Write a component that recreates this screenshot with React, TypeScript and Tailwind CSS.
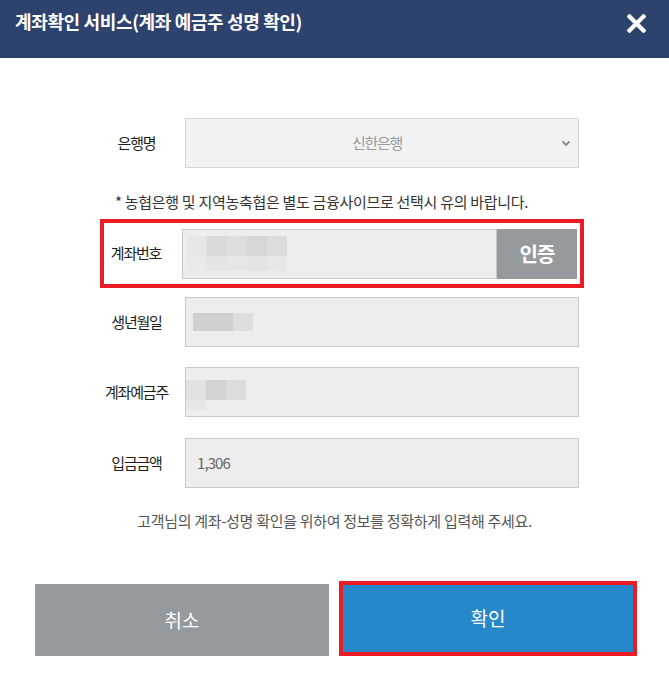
import React from 'react';

const font = { fontFamily: '"Noto Sans CJK KR", "Noto Sans", sans-serif' };

type Cell = { w: number; h: number; c: string };

// pixelated (blurred) placeholder for hidden personal data
const Mosaic: React.FC<{ rows: Cell[][] }> = ({ rows }) => (
  <div className="flex flex-col">
    {rows.map((row, i) => (
      <div key={i} className="flex">
        {row.map((cell, j) => (
          <div key={j} style={{ width: cell.w, height: cell.h, background: cell.c }} />
        ))}
      </div>
    ))}
  </div>
);

const Label: React.FC<{ children: React.ReactNode }> = ({ children }) => (
  <div className="w-[97px] shrink-0 text-center text-[15px] tracking-[-0.08em] text-[#1e1e1e]">{children}</div>
);

const Field: React.FC<{ children?: React.ReactNode; className?: string }> = ({ children, className = '' }) => (
  <div className={`flex h-[50px] w-[394px] items-center border border-[#c9c9c9] bg-[#ededed] ${className}`}>
    {children}
  </div>
);

const App: React.FC = () => {
  return (
    <div className="h-[688px] w-[669px] bg-white" style={font}>
      <header className="flex h-[58px] items-start justify-between bg-[#2e426e] px-[15px] pt-[8px]">
        <h1 className="text-[18px] font-bold tracking-[-0.02em] text-white">계좌확인 서비스(계좌 예금주 성명 확인)</h1>
        <button className="mr-[8px] mt-[6px]" aria-label="닫기">
          <svg width="19" height="19" viewBox="0 0 19 19">
            <path d="M2.5 2.5 L16.5 16.5 M16.5 2.5 L2.5 16.5" stroke="white" strokeWidth="4.2" strokeLinecap="square" />
          </svg>
        </button>
      </header>

      <main className="pt-[60px]">
        <div className="ml-[88px] flex w-[491px] items-center">
          <Label>은행명</Label>
          <div className="relative flex h-[50px] w-[394px] items-center justify-center border border-[#d6d6d6] bg-[#f2f2f2]">
            <span className="mr-[10px] text-[15px] tracking-[-0.09em] text-[#9a9a9a]">신한은행</span>
            <svg className="absolute right-[7px] top-[21px]" width="10" height="7" viewBox="0 0 10 7">
              <path d="M1.5 1.5 L5 5 L8.5 1.5" fill="none" stroke="#8a8a8a" strokeWidth="1.8" />
            </svg>
          </div>
        </div>

        <p className="mt-[24px] ml-[115px] text-[15px] leading-[20px] tracking-[-0.02em] text-[#333]">
          * 농협은행 및 지역농축협은 별도 금융사이므로 선택시 유의 바랍니다.
        </p>

        <div className="ml-[100px] mt-[7px] flex h-[69px] w-[484px] items-center border-4 border-[#ed1c24]">
          <div className="w-[64px] shrink-0 text-center text-[15px] tracking-[-0.08em] text-[#1e1e1e]">계좌번호</div>
          <div className="ml-[14px] flex h-[50px] w-[395px]">
            <div className="flex flex-1 items-center border border-[#c9c9c9] bg-[#ededed] pl-[4px]">
              <Mosaic
                rows={[
                  [
                    { w: 20, h: 20, c: '#e6e6e6' },
                    { w: 20, h: 20, c: '#d9d9d9' },
                    { w: 20, h: 20, c: '#dddddd' },
                    { w: 20, h: 20, c: '#d7d7d7' },
                    { w: 20, h: 20, c: '#dcdcdc' },
                  ],
                  [
                    { w: 20, h: 15, c: '#e9e9e9' },
                    { w: 20, h: 15, c: '#e4e4e4' },
                    { w: 20, h: 15, c: '#e6e6e6' },
                    { w: 20, h: 15, c: '#e3e3e3' },
                    { w: 20, h: 15, c: '#e7e7e7' },
                  ],
                ]}
              />
            </div>
            <button className="w-[80px] bg-[#959a9e] text-[20px] font-bold tracking-[-0.05em] text-white">인증</button>
          </div>
        </div>

        <div className="ml-[88px] mt-[9px] flex w-[491px] items-center">
          <Label>생년월일</Label>
          <Field className="pl-[7px]">
            <Mosaic
              rows={[
                [
                  { w: 40, h: 18, c: '#d0d0d0' },
                  { w: 20, h: 18, c: '#dedede' },
                ],
              ]}
            />
          </Field>
        </div>

        <div className="ml-[88px] mt-[20px] flex w-[491px] items-center">
          <Label>계좌예금주</Label>
          <Field className="items-start pt-[12px]">
            <Mosaic
              rows={[
                [
                  { w: 20, h: 20, c: '#e2e2e2' },
                  { w: 20, h: 20, c: '#d3d3d3' },
                  { w: 20, h: 20, c: '#dcdcdc' },
                ],
                [{ w: 20, h: 10, c: '#e6e6e6' }],
              ]}
            />
          </Field>
        </div>

        <div className="ml-[88px] mt-[21px] flex w-[491px] items-center">
          <Label>입금금액</Label>
          <Field className="pl-[11px]">
            <span className="text-[15px] tracking-[-0.06em] text-[#666]">1,306</span>
          </Field>
        </div>

        <p className="mt-[23px] text-center text-[15px] leading-[20px] tracking-[-0.02em] text-[#555]">
          고객님의 계좌-성명 확인을 위하여 정보를 정확하게 입력해 주세요.
        </p>

        <div className="ml-[35px] mt-[50px] flex items-start gap-[10px]">
          <button className="mt-[3px] h-[72px] w-[294px] bg-[#959a9e] text-[19px] text-white">취소</button>
          <div className="h-[75px] w-[298px] border-4 border-[#ed1c24]">
            <button className="h-full w-full bg-[#2488cb] text-[19px] text-white">확인</button>
          </div>
        </div>
      </main>
    </div>
  );
};

export default App;
